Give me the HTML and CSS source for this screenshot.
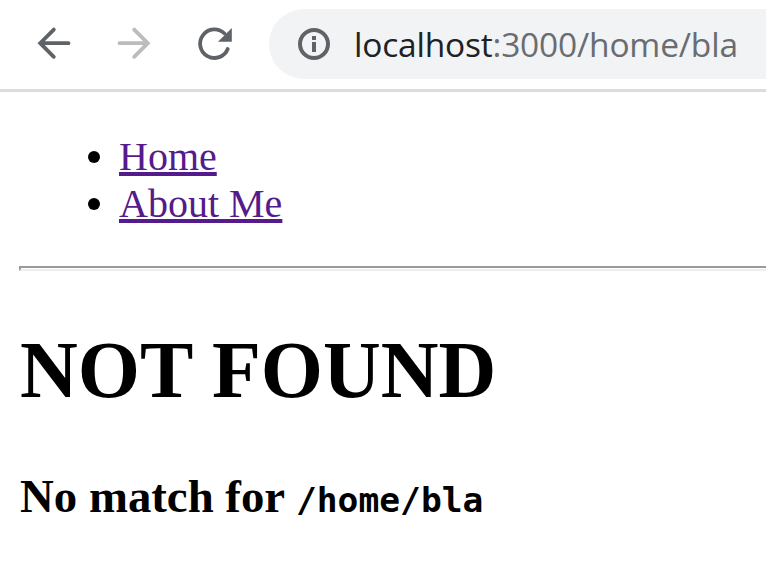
FILE: index.html
```html
<!DOCTYPE html>
<html lang="en">
<head>
<meta charset="utf-8">
<title>Not found</title>
<link rel="stylesheet" href="styles.css">
</head>
<body>
<header class="toolbar">
  <svg class="icon back" viewBox="0 0 34 34" aria-label="Back"><path d="M31.5 17.2H3.2M16.8 3.6L3.2 17.2l13.6 13.6"/></svg>
  <svg class="icon forward" viewBox="0 0 34 34" aria-label="Forward"><path d="M2.5 17.2h28.3M17.2 3.6L30.8 17.2 17.2 30.8"/></svg>
  <svg class="icon reload" viewBox="0 0 36 36" aria-label="Reload"><path d="M30.7 23A14.3 14.3 0 1 1 27.5 7.5"/><path class="tip" d="M34.8 2v13.8H21z"/></svg>
  <div class="address">
    <svg class="info" viewBox="0 0 32 32" aria-label="Site information"><circle cx="16" cy="16" r="14"/><path d="M14 8h4v4h-4zM14 14h4v10h-4z"/></svg>
    <span class="url"><span class="host">localhost</span>:3000/home/bla</span>
  </div>
</header>
<main class="page">
  <ul class="links">
    <li><a href="#home">Home</a></li>
    <li><a href="#about">About Me</a></li>
  </ul>
  <hr class="rule">
  <h1>NOT FOUND</h1>
  <h3>No match for <code>/home/bla</code></h3>
</main>
</body>
</html>
```
FILE: styles.css
```css
* { box-sizing: border-box; }
body {
  margin: 0;
  background: #fff;
  color: #000;
  font: 40px/47px "Liberation Serif", serif;
  overflow: hidden;
}
.toolbar {
  display: flex;
  align-items: flex-start;
  height: 92px;
  border-bottom: 3px solid #dadce0;
  padding: 9px 0 0 37px;
}
.icon {
  flex: none;
  width: 34px;
  height: 34px;
  margin-top: 17px;
  fill: none;
  stroke: #5f6368;
  stroke-width: 3.8;
  stroke-linecap: round;
}
.forward { margin-left: 46px; stroke: #babcbe; }
.reload { width: 36px; height: 36px; margin: 17px 0 0 46px; }
.reload .tip { fill: #5f6368; stroke: none; }
.address {
  flex: 1;
  display: flex;
  align-items: center;
  height: 70px;
  margin-left: 36px;
  padding-left: 29px;
  border-radius: 35px 0 0 35px;
  background: #f1f3f4;
}
.info { flex: none; width: 32px; height: 32px; fill: #5f6368; }
.info circle { fill: none; stroke: #5f6368; stroke-width: 4; }
.url {
  margin-left: 24px;
  font: 33.5px/48px "Open Sans", sans-serif;
  letter-spacing: -0.2px;
  color: #696c70;
  white-space: nowrap;
}
.host { color: #202124; }
.page { padding: 40px 0 0 19px; }
.links { list-style: none; margin: 0; padding: 0 0 0 69px; }
.links li { display: flex; align-items: center; }
.links li::before {
  content: "";
  width: 12px;
  height: 12px;
  margin: 3px 19px 0 0;
  border-radius: 50%;
  background: #000;
}
.links a {
  padding-top: 1px;
  margin-bottom: -1px;
  color: #551a8b;
  text-decoration-thickness: 4px;
  text-underline-offset: 2px;
  text-decoration-skip-ink: none;
}
.rule {
  height: 5px;
  margin: 40px 0 0;
  border: solid;
  border-width: 2px 0 2px 2px;
  border-color: #9a9a9a #eee #eee #9a9a9a;
}
h1, h3 { padding-left: 1px; }
h1 { margin: 53px 0 0; font-size: 80px; line-height: 92px; }
h3 { margin: 53px 0 0; font-size: 46.8px; line-height: 54px; }
code { font: bold 34.6px/40px "DejaVu Sans Mono", monospace; }
```
